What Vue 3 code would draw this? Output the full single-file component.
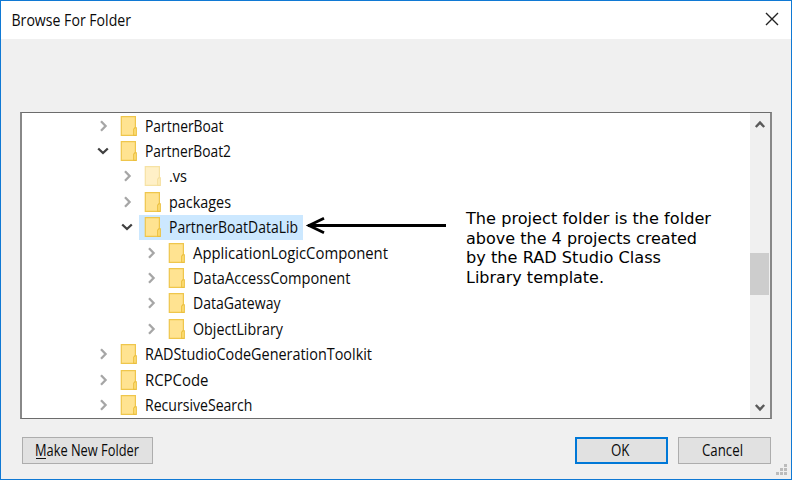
<script setup>
const rows = [
  { name: 'PartnerBoat', depth: 0, width: 78.5 },
  { name: 'PartnerBoat2', depth: 0, open: true, width: 86 },
  { name: '.vs', depth: 1, hidden: true, width: 18 },
  { name: 'packages', depth: 1, width: 62 },
  { name: 'PartnerBoatDataLib', depth: 1, open: true, selected: true, width: 129 },
  { name: 'ApplicationLogicComponent', depth: 2, width: 195 },
  { name: 'DataAccessComponent', depth: 2, width: 157.5 },
  { name: 'DataGateway', depth: 2, width: 87.5 },
  { name: 'ObjectLibrary', depth: 2, width: 90 },
  { name: 'RADStudioCodeGenerationToolkit', depth: 0, width: 227 },
  { name: 'RCPCode', depth: 0, width: 63.5 },
  { name: 'RecursiveSearch', depth: 0, width: 107.5 },
]
const note = [
  { text: 'The project folder is the folder', width: 245 },
  { text: 'above the 4 projects created', width: 231 },
  { text: 'by the RAD Studio Class', width: 195 },
  { text: 'Library template.', width: 138 },
]
</script>

<template>
  <div class="dialog">
    <header class="titlebar">
      <svg class="title" width="122" height="24">
        <text x="0.5" y="18" textLength="119.5" lengthAdjust="spacingAndGlyphs">Browse For Folder</text>
      </svg>
      <svg class="close" width="14" height="14" viewBox="0 0 14 14">
        <path d="M1 1L13 13M13 1L1 13" fill="none" stroke="#222" stroke-width="1.4" />
      </svg>
    </header>

    <main class="tree">
      <ul class="list">
        <li v-for="row in rows" :key="row.name" class="row" :class="'depth' + row.depth">
          <svg class="chevron" width="14" height="14" viewBox="0 0 14 14">
            <path v-if="row.open" d="M2.2 4.5L7 9L11.8 4.5" stroke="#404040" />
            <path v-else d="M5 2.2L9.6 7L5 11.8" stroke="#a6a6a6" />
          </svg>
          <span class="item" :class="{ selected: row.selected }">
            <svg class="folder" :class="{ faded: row.hidden }" width="18" height="22" viewBox="0 0 18 22">
              <path d="M1.3 1.6H15.4V20.4H1.3Z" fill="#ffe391" stroke="#efc64c" stroke-width="1.2" />
              <path d="M13.7 20.4V14.2L14.8 12.8H16.3V20.4Z" fill="#ffe07d" stroke="#ebbf3e" stroke-width="1.1" />
            </svg>
            <svg class="label" :width="row.width" height="24">
              <text x="0" y="17.5" :textLength="row.width" lengthAdjust="spacingAndGlyphs">{{ row.name }}</text>
            </svg>
          </span>
        </li>
      </ul>
      <div class="scrollbar">
        <svg width="12" height="10" viewBox="0 0 12 10"><path d="M1.8 7L6 2.6L10.2 7" /></svg>
        <div class="thumb"></div>
        <svg width="12" height="10" viewBox="0 0 12 10"><path d="M1.8 3L6 7.4L10.2 3" /></svg>
      </div>
    </main>

    <footer class="actions">
      <button class="make">
        <svg width="106" height="24">
          <text x="0" y="17" textLength="104" lengthAdjust="spacingAndGlyphs">Make New Folder</text>
          <path d="M1 19.5H11" stroke="#111" />
        </svg>
      </button>
      <button class="ok">
        <svg width="21" height="24"><text x="0" y="17" textLength="18.5" lengthAdjust="spacingAndGlyphs">OK</text></svg>
      </button>
      <button class="cancel">
        <svg width="45" height="24"><text x="0" y="17" textLength="41" lengthAdjust="spacingAndGlyphs">Cancel</text></svg>
      </button>
    </footer>

    <svg class="arrow" width="142" height="20" viewBox="0 0 142 20">
      <path d="M3 10.5H141" stroke="#000" stroke-width="2.8" fill="none" />
      <path d="M19 3.3L4 10.5L19 17.7" stroke="#000" stroke-width="2.8" fill="none" />
    </svg>
    <div class="note">
      <svg v-for="line in note" :key="line.text" width="250" height="24">
        <text x="0" y="17" :textLength="line.width" lengthAdjust="spacingAndGlyphs">{{ line.text }}</text>
      </svg>
    </div>
    <svg class="grip" width="12" height="12" viewBox="0 0 12 12">
      <path d="M8 0h3v3h-3zM4 4h3v3h-3zM8 4h3v3h-3zM0 8h3v3h-3zM4 8h3v3h-3zM8 8h3v3h-3z" fill="#bcbcbc" />
    </svg>
  </div>
</template>

<style>
body { margin: 0; }
</style>

<style scoped>
.dialog {
  position: relative;
  box-sizing: border-box;
  width: 792px;
  height: 480px;
  border: 1px solid #1079d4;
  background: #f0f0f0;
  display: flex;
  flex-direction: column;
  font-family: "Open Sans", "Noto Sans", sans-serif;
  font-size: 15.8px;
  color: #111;
}
svg { display: block; flex: none; overflow: visible; }
text { fill: #0a0a0a; }
.titlebar {
  height: 38px;
  flex: none;
  box-sizing: border-box;
  padding: 0 12px 0 10px;
  background: #fff;
  display: flex;
  align-items: center;
  justify-content: space-between;
}
.close { margin-top: -2px; }
.tree {
  box-sizing: border-box;
  width: 752px;
  height: 307px;
  margin: 73px 0 0 19px;
  flex: none;
  border: 1px solid #6c6c6c;
  border-left: 2px solid #888;
  border-right: 2px solid #888;
  background: #fff;
  display: flex;
  overflow: hidden;
}
.list { flex: 1; margin: 0; padding: 0; list-style: none; }
.row { height: 25.4px; display: flex; align-items: center; }
.depth0 { padding-left: 74px; }
.depth1 { padding-left: 98px; }
.depth2 { padding-left: 122px; }
.chevron path { fill: none; stroke-width: 2.3; }
.item { display: flex; align-items: center; height: 25px; margin-left: 5px; padding: 0 5px 0 5px; }
.selected { background: #cce8ff; }
.folder { margin-right: 7px; }
.faded { opacity: .5; }
.scrollbar {
  width: 20px;
  box-sizing: border-box;
  padding: 7px 1px 6px 0;
  background: #f0f0f0;
  display: flex;
  flex-direction: column;
  align-items: center;
}
.scrollbar path { fill: none; stroke: #5a5a5a; stroke-width: 2.4; }
.thumb { width: 19px; height: 42px; margin: 123px 0 auto; background: #cdcdcd; }
.actions { display: flex; padding: 18px 20px 0 21px; }
button {
  box-sizing: border-box;
  height: 27px;
  padding: 0;
  border: 1px solid #adadad;
  background: #e1e1e1;
  display: flex;
  align-items: center;
  justify-content: center;
  font: inherit;
}
.make { width: 131px; margin-right: auto; }
.ok { width: 93px; border: 2px solid #0078d7; margin-right: 10px; }
.cancel { width: 93px; }
.arrow { position: absolute; left: 304px; top: 214px; }
.note {
  position: absolute;
  left: 465px;
  top: 206px;
  font-family: "DejaVu Sans", sans-serif;
  font-size: 15.5px;
  display: grid;
  grid-auto-rows: 19.5px;
}
.note text { fill: #000; }
.grip { position: absolute; right: 3px; bottom: 3px; }
</style>
